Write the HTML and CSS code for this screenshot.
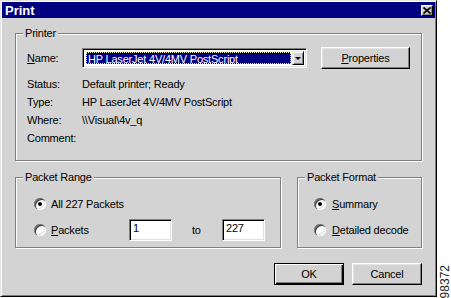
FILE: index.html
```html
<!DOCTYPE html>
<html lang="en">
<head>
  <meta charset="UTF-8">
  <title>Print</title>
  <link rel="stylesheet" href="styles.css">
</head>
<body>

  <div class="dialog">
    <div class="titlebar">
      <span class="title">Print</span>
      <span class="close">
        <svg width="8" height="7" viewBox="0 0 8 7"><path d="M0.5 0.5 L7.5 6.5 M7.5 0.5 L0.5 6.5" stroke="#000" stroke-width="1.7"/></svg>
      </span>
    </div>

    <div class="content">
      <!-- Printer -->
      <div class="group printer">
        <div class="group-label">Printer</div>
        <div class="name-row">
          <span class="label"><u>N</u>ame:</span>
          <div class="combo">
            <span class="combo-value">HP LaserJet 4V/4MV PostScript</span>
            <span class="combo-arrow"></span>
          </div>
          <button class="btn props"><u>P</u>roperties</button>
        </div>
        <div class="info-row"><span class="label">Status:</span><span>Default printer; Ready</span></div>
        <div class="info-row"><span class="label">Type:</span><span>HP LaserJet 4V/4MV PostScript</span></div>
        <div class="info-row"><span class="label">Where:</span><span>\\Visual\4v_q</span></div>
        <div class="info-row"><span class="label">Comment:</span><span></span></div>
      </div>

      <div class="lower">
        <!-- Packet Range -->
        <div class="group range">
          <div class="group-label">Packet Range</div>
          <div class="option first">
            <span class="radio checked"></span>
            <span class="option-text">All 227 Packets</span>
          </div>
          <div class="option second">
            <span class="radio"></span>
            <span class="option-text packets"><u>P</u>ackets</span>
            <span class="field">1</span>
            <span class="to">to</span>
            <span class="field">227</span>
          </div>
        </div>

        <!-- Packet Format -->
        <div class="group format">
          <div class="group-label">Packet Format</div>
          <div class="option first">
            <span class="radio checked"></span>
            <span class="option-text"><u>S</u>ummary</span>
          </div>
          <div class="option second">
            <span class="radio"></span>
            <span class="option-text"><u>D</u>etailed decode</span>
          </div>
        </div>
      </div>

      <div class="actions">
        <button class="btn default">OK</button>
        <button class="btn">Cancel</button>
      </div>
    </div>
  </div>

  <div class="figure-id">98372</div>

</body>
</html>
```

FILE: styles.css
```css
* {
  margin: 0;
  padding: 0;
  box-sizing: border-box;
}

body {
  height: 298px;
  overflow: hidden;
  display: flex;
  align-items: flex-start;
  background: #fff;
  font-family: "Liberation Sans", Arial, sans-serif;
  font-size: 11px;
  letter-spacing: -0.2px;
  color: #000;
}

/* Window frame */
.dialog {
  width: 437px;
  height: 297px;
  padding: 1px;
  background: #d3d3d3;
  border: 1px solid;
  border-color: #e4e4e4 #000 #000 #e4e4e4;
  box-shadow: inset 1px 1px #fff, inset -1px -1px #808080;
}

.titlebar {
  height: 16px;
  display: flex;
  align-items: center;
  justify-content: space-between;
  background: #000080;
  color: #fff;
  padding: 0 2px 0 3px;
}

.title {
  font-size: 13px;
  font-weight: bold;
  letter-spacing: 0;
}

.close {
  width: 12px;
  height: 11px;
  display: flex;
  align-items: center;
  justify-content: center;
  background: #d3d3d3;
  border: 1px solid;
  border-color: #fff #000 #000 #fff;
  box-shadow: inset -1px -1px #808080;
}

.content {
  padding: 15px 13px 0 13px;
}

/* Etched group boxes */
.group {
  border: 1px solid #808080;
  box-shadow: inset 1px 1px #fff, 1px 1px #fff;
}

.group-label {
  display: block;
  width: fit-content;
  height: 13px;
  line-height: 13px;
  margin: -7px 0 0 7px;
  padding: 0 2px;
  background: #d3d3d3;
}

.printer {
  height: 128px;
  padding: 0 10px 0 11px;
}

.printer .group-label {
  margin-left: -4px;
}

.label {
  width: 55px;
  flex-shrink: 0;
}

.name-row {
  height: 22px;
  margin-top: 7px;
  display: flex;
  align-items: center;
}

.info-row {
  height: 18px;
  display: flex;
  align-items: center;
}

.name-row + .info-row {
  margin-top: 6px;
}

/* Sunken fields */
.combo, .field {
  background: #fff;
  border: 1px solid;
  border-color: #808080 #fff #fff #808080;
  box-shadow: inset 1px 1px #000, inset -1px -1px #dfdfdf;
}

.combo {
  width: 225px;
  height: 20px;
  padding: 2px;
  display: flex;
  margin-right: 14px;
}

.combo-value {
  flex: 1;
  margin: 1px;
  padding-left: 1px;
  line-height: 12px;
  background: #000080;
  color: #fff;
  border: 1px dotted #f0f0a0;
  white-space: nowrap;
  overflow: hidden;
}

.combo-arrow {
  width: 12px;
  position: relative;
  background: #d3d3d3;
  border: 1px solid;
  border-color: #e4e4e4 #000 #000 #e4e4e4;
  box-shadow: inset 1px 1px #fff, inset -1px -1px #808080;
}

.combo-arrow::after {
  content: "";
  position: absolute;
  left: 2px;
  top: 5px;
  border-left: 3px solid transparent;
  border-right: 3px solid transparent;
  border-top: 3px solid #000;
}

/* Buttons */
.btn {
  height: 22px;
  width: 70px;
  font: inherit;
  letter-spacing: inherit;
  color: #000;
  background: #d3d3d3;
  border: 1px solid;
  border-color: #fff #000 #000 #fff;
  box-shadow: inset -1px -1px #808080, inset 1px 1px #e4e4e4;
}

.btn.props {
  width: 89px;
}

.btn.default {
  border-color: #000;
  box-shadow: inset 1px 1px #fff, inset -1px -1px #000, inset -2px -2px #808080;
}

/* Lower group row */
.lower {
  display: flex;
  gap: 16px;
  margin-top: 16px;
}

.range, .format {
  height: 71px;
}

.range {
  width: 266px;
  padding-left: 18px;
}

.range .group-label {
  margin-left: -11px;
}

.format {
  width: 125px;
  padding-left: 16px;
}

.format .group-label {
  margin-left: -9px;
}

.option {
  display: flex;
  align-items: center;
}

.option.first {
  height: 20px;
  margin-top: 10px;
}

.option.second {
  height: 22px;
  margin-top: 5px;
}

.radio {
  width: 12px;
  height: 12px;
  flex-shrink: 0;
  margin-right: 5px;
  border-radius: 50%;
  background: #fff;
  display: flex;
  align-items: center;
  justify-content: center;
  box-shadow: inset 1px 1px #808080, inset 2px 2px #404040, inset -1px -1px #fff, inset -2px -2px #dfdfdf;
}

.format .radio {
  margin-right: 6px;
}

.radio.checked::after {
  content: "";
  width: 4px;
  height: 4px;
  border-radius: 50%;
  background: #000;
}

.packets {
  width: 78px;
}

.field {
  width: 43px;
  height: 22px;
  padding: 2px 3px;
  line-height: 13px;
}

.to {
  width: 50px;
  padding-left: 20px;
}

.actions {
  display: flex;
  justify-content: flex-end;
  gap: 8px;
  margin-top: 15px;
}

/* Figure number outside the window */
.figure-id {
  align-self: flex-end;
  margin: 0 0 0 2px;
  writing-mode: vertical-rl;
  transform: rotate(180deg);
  font-size: 12px;
  line-height: 12px;
  letter-spacing: 0;
  color: #222;
}
```
